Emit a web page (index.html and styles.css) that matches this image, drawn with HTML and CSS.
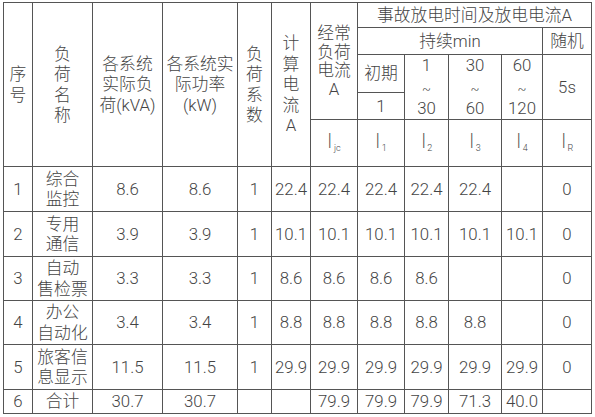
FILE: index.html
```html
<!DOCTYPE html>
<html lang="zh">
<head>
<meta charset="utf-8">
<link rel="stylesheet" href="styles.css">
</head>
<body>
<table class="tbl">
  <colgroup>
    <col class="c1"><col class="c2"><col class="c3"><col class="c4"><col class="c5"><col class="c6">
    <col class="c7"><col class="c8"><col class="c9"><col class="c10"><col class="c11"><col class="c12">
  </colgroup>
  <tr class="h1">
    <td rowspan="5">序<br>号</td>
    <td rowspan="5">负<br>荷<br>名<br>称</td>
    <td rowspan="5">各系统<br>实际负<br>荷(kVA)</td>
    <td rowspan="5">各系统实<br>际功率<br>(kW)</td>
    <td rowspan="5">负<br>荷<br>系<br>数</td>
    <td rowspan="5">计<br>算<br>电<br>流<br>A</td>
    <td rowspan="4" class="tight">经常<br>负荷<br>电流<br>A</td>
    <td colspan="5">事故放电时间及放电电流A</td>
  </tr>
  <tr class="h2">
    <td colspan="4">持续min</td>
    <td>随机</td>
  </tr>
  <tr class="h3">
    <td>初期</td>
    <td rowspan="2">1<br><span class="tl">~</span><br>30</td>
    <td rowspan="2">30<br><span class="tl">~</span><br>60</td>
    <td rowspan="2">60<br><span class="tl">~</span><br>120</td>
    <td rowspan="2">5s</td>
  </tr>
  <tr class="h4">
    <td>1</td>
  </tr>
  <tr class="h5">
    <td><span class="sym">I</span><sub class="sb">jc</sub></td>
    <td><span class="sym">I</span><sub class="sb">1</sub></td>
    <td><span class="sym">I</span><sub class="sb">2</sub></td>
    <td><span class="sym">I</span><sub class="sb">3</sub></td>
    <td><span class="sym">I</span><sub class="sb">4</sub></td>
    <td><span class="sym">I</span><sub class="sb">R</sub></td>
  </tr>
  <tr class="r45">
    <td>1</td><td>综合<br>监控</td><td>8.6</td><td>8.6</td><td>1</td><td>22.4</td>
    <td>22.4</td><td>22.4</td><td>22.4</td><td>22.4</td><td></td><td>0</td>
  </tr>
  <tr class="r45">
    <td>2</td><td>专用<br>通信</td><td>3.9</td><td>3.9</td><td>1</td><td>10.1</td>
    <td>10.1</td><td>10.1</td><td>10.1</td><td>10.1</td><td>10.1</td><td>0</td>
  </tr>
  <tr class="r44">
    <td>3</td><td>自动<br>售检票</td><td>3.3</td><td>3.3</td><td>1</td><td>8.6</td>
    <td>8.6</td><td>8.6</td><td>8.6</td><td></td><td></td><td>0</td>
  </tr>
  <tr class="r44">
    <td>4</td><td>办公<br>自动化</td><td>3.4</td><td>3.4</td><td>1</td><td>8.8</td>
    <td>8.8</td><td>8.8</td><td>8.8</td><td>8.8</td><td></td><td>0</td>
  </tr>
  <tr class="r45">
    <td>5</td><td>旅客信<br>息显示</td><td>11.5</td><td>11.5</td><td>1</td><td>29.9</td>
    <td>29.9</td><td>29.9</td><td>29.9</td><td>29.9</td><td>29.9</td><td>0</td>
  </tr>
  <tr class="r24">
    <td>6</td><td>合计</td><td>30.7</td><td>30.7</td><td></td><td></td>
    <td>79.9</td><td>79.9</td><td>79.9</td><td>71.3</td><td>40.0</td><td></td>
  </tr>
</table>
</body>
</html>
```

FILE: styles.css
```css
html, body {
  margin: 0;
  padding: 0;
  background: #ffffff;
}
body {
  padding: 2px 0 0 3px;
  font-family: "Roboto", "Noto Sans CJK SC", sans-serif;
  color: #444444;
}
.tbl {
  border-collapse: collapse;
  table-layout: fixed;
  width: 589px;
  font-size: 16.8px;
  line-height: 20.5px;
  font-weight: 300;
}
.tbl td {
  border: 1px solid #555555;
  padding: 0;
  text-align: center;
  vertical-align: middle;
  white-space: nowrap;
  overflow: hidden;
}
.c1 { width: 29px; }
.c2 { width: 60px; }
.c3 { width: 70px; }
.c4 { width: 75px; }
.c5 { width: 34px; }
.c6 { width: 39px; }
.c7 { width: 47px; }
.c8 { width: 47px; }
.c9 { width: 44px; }
.c10 { width: 53px; }
.c11 { width: 41px; }
.c12 { width: 49px; }

.h1 { height: 25px; }
.h2 { height: 27px; }
.h3 { height: 38px; }
.h4 { height: 27px; }
.h5 { height: 47px; }
.r45 { height: 45px; }
.r44 { height: 44px; }
.r24 { height: 24px; }

.tight { line-height: 18.5px; }
.tl {
  font-size: 13px;
  position: relative;
  top: 2px;
}
.sym {
  font-size: 21px;
  font-weight: 300;
  transform: scaleX(0.7);
  display: inline-block;
}
.sb {
  font-size: 9px;
  vertical-align: baseline;
  position: relative;
  top: 3px;
  margin-left: 1px;
}
```
